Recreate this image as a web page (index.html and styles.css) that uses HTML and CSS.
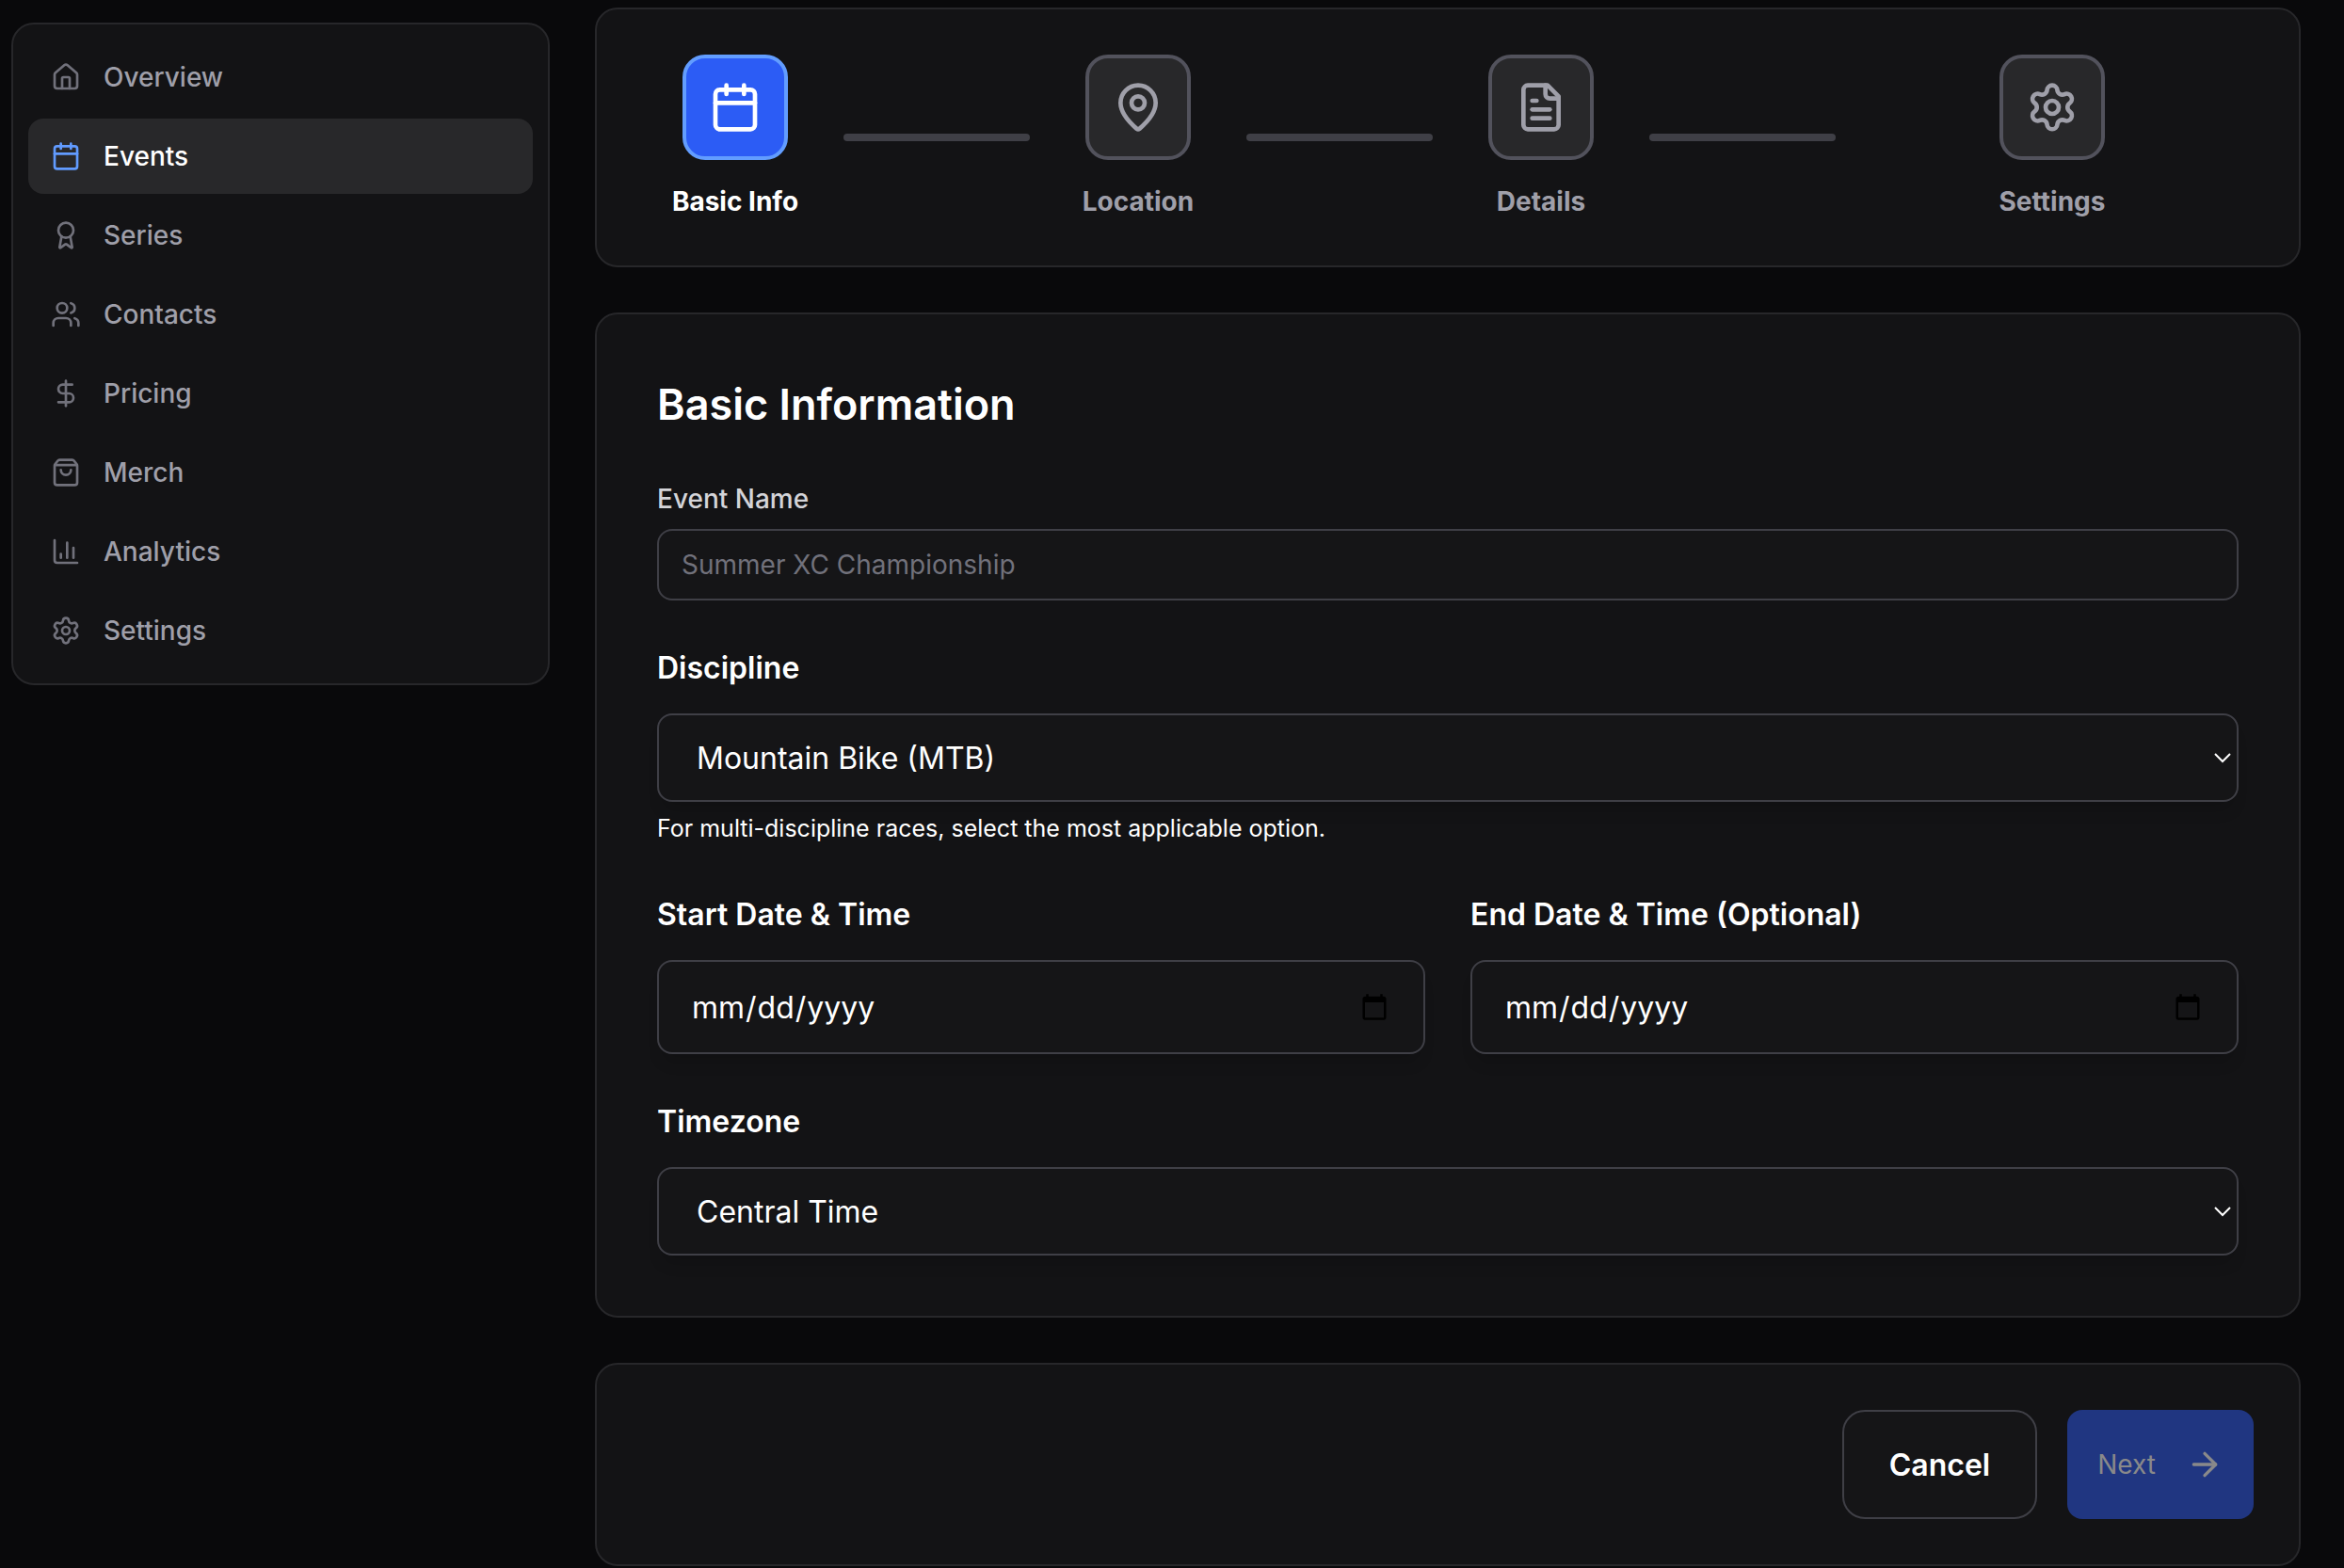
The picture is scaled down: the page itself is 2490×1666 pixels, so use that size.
FILE: index.html
```
<!DOCTYPE html>
<html lang="en">
<head>
    <meta charset="UTF-8">
    <meta name="viewport" content="width=device-width, initial-scale=1.0">
    <title>Create Event</title>
    <link rel="stylesheet" href="styles.css">
</head>
<body>
    <div class="layout">
        <nav class="sidebar">
            <a href="#" class="nav-item">
                <svg class="icon" viewBox="0 0 24 24"><path d="M15 21v-8a1 1 0 0 0-1-1h-4a1 1 0 0 0-1 1v8"/><path d="M3 10a2 2 0 0 1 .709-1.528l7-6a2 2 0 0 1 2.582 0l7 6A2 2 0 0 1 21 10v9a2 2 0 0 1-2 2H5a2 2 0 0 1-2-2z"/></svg>
                Overview
            </a>
            <a href="#" class="nav-item active">
                <svg class="icon" viewBox="0 0 24 24"><path d="M8 2v4"/><path d="M16 2v4"/><rect width="18" height="18" x="3" y="4" rx="2"/><path d="M3 10h18"/></svg>
                Events
            </a>
            <a href="#" class="nav-item">
                <svg class="icon" viewBox="0 0 24 24"><path d="m15.477 12.89 1.515 8.526a.5.5 0 0 1-.81.47l-3.58-2.687a1 1 0 0 0-1.197 0l-3.586 2.686a.5.5 0 0 1-.81-.469l1.514-8.526"/><circle cx="12" cy="8" r="6"/></svg>
                Series
            </a>
            <a href="#" class="nav-item">
                <svg class="icon" viewBox="0 0 24 24"><path d="M16 21v-2a4 4 0 0 0-4-4H6a4 4 0 0 0-4 4v2"/><path d="M16 3.128a4 4 0 0 1 0 7.744"/><path d="M22 21v-2a4 4 0 0 0-3-3.87"/><circle cx="9" cy="7" r="4"/></svg>
                Contacts
            </a>
            <a href="#" class="nav-item">
                <svg class="icon" viewBox="0 0 24 24"><path d="M12 2v20"/><path d="M17 5H9.5a3.5 3.5 0 0 0 0 7h5a3.5 3.5 0 0 1 0 7H6"/></svg>
                Pricing
            </a>
            <a href="#" class="nav-item">
                <svg class="icon" viewBox="0 0 24 24"><path d="M16 10a4 4 0 0 1-8 0"/><path d="M3.103 6.034h17.794"/><path d="M3.4 5.467a2 2 0 0 0-.4 1.2V20a2 2 0 0 0 2 2h14a2 2 0 0 0 2-2V6.667a2 2 0 0 0-.4-1.2l-2-2.667A2 2 0 0 0 17 2H7a2 2 0 0 0-1.6.8z"/></svg>
                Merch
            </a>
            <a href="#" class="nav-item">
                <svg class="icon" viewBox="0 0 24 24"><path d="M3 3v16a2 2 0 0 0 2 2h16"/><path d="M18 17V9"/><path d="M13 17V5"/><path d="M8 17v-3"/></svg>
                Analytics
            </a>
            <a href="#" class="nav-item">
                <svg class="icon" viewBox="0 0 24 24"><path d="M9.671 4.136a2.34 2.34 0 0 1 4.659 0 2.34 2.34 0 0 0 3.319 1.915 2.34 2.34 0 0 1 2.33 4.033 2.34 2.34 0 0 0 0 3.831 2.34 2.34 0 0 1-2.33 4.033 2.34 2.34 0 0 0-3.319 1.915 2.34 2.34 0 0 1-4.659 0 2.34 2.34 0 0 0-3.32-1.915 2.34 2.34 0 0 1-2.33-4.033 2.34 2.34 0 0 0 0-3.831A2.34 2.34 0 0 1 6.35 6.051a2.34 2.34 0 0 0 3.319-1.915"/><circle cx="12" cy="12" r="3"/></svg>
                Settings
            </a>
        </nav>

        <main class="content">
            <!-- Wizard progress -->
            <section class="card steps">
                <div class="step current">
                    <div class="step-body">
                        <div class="step-icon">
                            <svg class="icon" viewBox="0 0 24 24"><path d="M8 2v4"/><path d="M16 2v4"/><rect width="18" height="18" x="3" y="4" rx="2"/><path d="M3 10h18"/></svg>
                        </div>
                        <span class="step-label">Basic Info</span>
                    </div>
                    <div class="step-line"></div>
                </div>
                <div class="step">
                    <div class="step-body">
                        <div class="step-icon">
                            <svg class="icon" viewBox="0 0 24 24"><path d="M20 10c0 4.993-5.539 10.193-7.399 11.799a1 1 0 0 1-1.202 0C9.539 20.193 4 14.993 4 10a8 8 0 0 1 16 0"/><circle cx="12" cy="10" r="3"/></svg>
                        </div>
                        <span class="step-label">Location</span>
                    </div>
                    <div class="step-line"></div>
                </div>
                <div class="step">
                    <div class="step-body">
                        <div class="step-icon">
                            <svg class="icon" viewBox="0 0 24 24"><path d="M15 2H6a2 2 0 0 0-2 2v16a2 2 0 0 0 2 2h12a2 2 0 0 0 2-2V7Z"/><path d="M14 2v4a2 2 0 0 0 2 2h4"/><path d="M10 9H8"/><path d="M16 13H8"/><path d="M16 17H8"/></svg>
                        </div>
                        <span class="step-label">Details</span>
                    </div>
                    <div class="step-line"></div>
                </div>
                <div class="step">
                    <div class="step-body">
                        <div class="step-icon">
                            <svg class="icon" viewBox="0 0 24 24"><path d="M9.671 4.136a2.34 2.34 0 0 1 4.659 0 2.34 2.34 0 0 0 3.319 1.915 2.34 2.34 0 0 1 2.33 4.033 2.34 2.34 0 0 0 0 3.831 2.34 2.34 0 0 1-2.33 4.033 2.34 2.34 0 0 0-3.319 1.915 2.34 2.34 0 0 1-4.659 0 2.34 2.34 0 0 0-3.32-1.915 2.34 2.34 0 0 1-2.33-4.033 2.34 2.34 0 0 0 0-3.831A2.34 2.34 0 0 1 6.35 6.051a2.34 2.34 0 0 0 3.319-1.915"/><circle cx="12" cy="12" r="3"/></svg>
                        </div>
                        <span class="step-label">Settings</span>
                    </div>
                </div>
            </section>

            <form class="card form">
                <h2>Basic Information</h2>

                <div class="field name-field">
                    <label for="event-name">Event Name</label>
                    <input type="text" id="event-name" placeholder="Summer XC Championship">
                </div>

                <div class="field">
                    <label for="discipline">Discipline</label>
                    <div class="select-wrap">
                        <select id="discipline">
                            <option>Mountain Bike (MTB)</option>
                            <option>Road</option>
                            <option>Gravel</option>
                            <option>Cyclocross</option>
                        </select>
                        <svg class="chevron" viewBox="0 0 18 12"><path d="M1 2l8 8 8-8"/></svg>
                    </div>
                    <p class="hint">For multi-discipline races, select the most applicable option.</p>
                </div>

                <div class="date-row">
                    <div class="field">
                        <label for="start-date">Start Date &amp; Time</label>
                        <input type="date" id="start-date">
                    </div>
                    <div class="field">
                        <label for="end-date">End Date &amp; Time (Optional)</label>
                        <input type="date" id="end-date">
                    </div>
                </div>

                <div class="field">
                    <label for="timezone">Timezone</label>
                    <div class="select-wrap">
                        <select id="timezone">
                            <option>Central Time</option>
                            <option>Eastern Time</option>
                            <option>Mountain Time</option>
                            <option>Pacific Time</option>
                        </select>
                        <svg class="chevron" viewBox="0 0 18 12"><path d="M1 2l8 8 8-8"/></svg>
                    </div>
                </div>
            </form>

            <footer class="card actions">
                <button type="button" class="btn-cancel">Cancel</button>
                <button type="button" class="btn-next" disabled>
                    Next
                    <svg class="icon" viewBox="0 0 24 24"><path d="M5 12h14"/><path d="m12 5 7 7-7 7"/></svg>
                </button>
            </footer>
        </main>
    </div>
</body>
</html>
```
FILE: styles.css
```
* {
    margin: 0;
    padding: 0;
    box-sizing: border-box;
    font-family: 'Inter', sans-serif;
}

body {
    background-color: #09090b;
    color: #fff;
    font-size: 28px;
    line-height: 40px;
}

.layout {
    display: flex;
    align-items: flex-start;
    gap: 48px;
    padding: 8px 46px 2px 12px;
}

.icon {
    flex-shrink: 0;
    fill: none;
    stroke: currentColor;
    stroke-width: 2;
    stroke-linecap: round;
    stroke-linejoin: round;
}

/* Sidebar */
.sidebar {
    display: flex;
    flex-direction: column;
    gap: 4px;
    width: 572px;
    flex-shrink: 0;
    margin-top: 16px;
    padding: 16px;
    background-color: #131315;
    border: 2px solid #27272a;
    border-radius: 24px;
}

.nav-item {
    display: flex;
    align-items: center;
    gap: 24px;
    padding: 20px 24px;
    border-radius: 16px;
    color: #9f9fa9;
    font-weight: 500;
    text-decoration: none;
}

.nav-item .icon {
    width: 32px;
    height: 32px;
    color: #71717b;
}

.nav-item.active {
    background-color: #28282a;
    color: #fff;
}

.nav-item.active .icon {
    color: #619bff;
}

/* Main column */
.content {
    display: flex;
    flex-direction: column;
    flex: 1;
    min-width: 0;
    gap: 48px;
}

.card {
    background-color: #131315;
    border: 2px solid #27272a;
    border-radius: 24px;
}

.steps {
    display: flex;
    padding: 48px;
}

.step {
    display: flex;
    flex: 1;
    align-items: center;
}

.step-body {
    display: flex;
    flex: 1;
    flex-direction: column;
    align-items: center;
    gap: 24px;
}

.step-icon {
    display: flex;
    align-items: center;
    justify-content: center;
    width: 112px;
    height: 112px;
    background-color: #28282a;
    border: 4px solid #52525c;
    border-radius: 24px;
    color: #9f9fa9;
}

.step-icon .icon {
    width: 56px;
    height: 56px;
}

.step-label {
    color: #9f9fa9;
    font-weight: 700;
    white-space: nowrap;
}

.step-line {
    flex: 1;
    height: 8px;
    margin: 0 16px;
    background-color: #3f3f46;
    border-radius: 4px;
}

.step.current .step-icon {
    background-color: #2c5cf5;
    border-color: #629dff;
    color: #fff;
}

.step.current .step-label {
    color: #fff;
}

/* Form */
.form {
    display: flex;
    flex-direction: column;
    gap: 48px;
    padding: 64px;
}

.form h2 {
    font-size: 45px;
    font-weight: 600;
    line-height: 64px;
}

.field {
    display: flex;
    flex-direction: column;
}

.field label {
    margin-bottom: 24px;
    font-size: 32px;
    font-weight: 600;
    line-height: 48px;
}

.field input,
.field select {
    width: 100%;
    color: #fff;
    background-color: #151517;
    border: 2px solid #3f3f46;
    border-radius: 16px;
    outline: none;
}

.name-field label {
    margin-bottom: 12px;
    color: #d4d4d8;
    font-size: 28px;
    font-weight: 500;
    line-height: 40px;
}

.name-field input {
    height: 76px;
    padding: 0 24px;
    font-size: 28px;
}

.name-field input::placeholder {
    color: #71717b;
}

.field select,
.field input[type="date"] {
    font-size: 32px;
    box-shadow: 0 14px 16px -6px rgba(0, 0, 0, 0.15);
}

.select-wrap {
    position: relative;
}

.field select {
    display: block;
    height: 94px;
    padding: 0 40px;
    appearance: none;
}

.chevron {
    position: absolute;
    top: 41px;
    right: 8px;
    width: 18px;
    height: 12px;
    fill: none;
    stroke: #fff;
    stroke-width: 2;
    pointer-events: none;
}

.hint {
    margin-top: 8px;
    font-size: 25px;
}

.date-row {
    display: grid;
    grid-template-columns: 1fr 1fr;
    gap: 48px;
}

.field input[type="date"] {
    height: 100px;
    padding: 0 34px;
}

.field input[type="date"]::-webkit-calendar-picker-indicator {
    width: 32px;
    height: 32px;
    padding: 2px;
    background: url("data:image/svg+xml,%3Csvg xmlns='http://www.w3.org/2000/svg' viewBox='0 0 24 24'%3E%3Cpath d='M20 3h-1V1h-2v2H7V1H5v2H4c-1.1 0-2 .9-2 2v16c0 1.1.9 2 2 2h16c1.1 0 2-.9 2-2V5c0-1.1-.9-2-2-2zm0 18H4V8h16v13z'/%3E%3C/svg%3E") center / 30px 30px no-repeat;
}

/* Footer buttons */
.actions {
    display: flex;
    justify-content: flex-end;
    gap: 32px;
    padding: 48px;
}

.actions button {
    height: 116px;
    cursor: pointer;
}

.btn-cancel {
    padding: 0 48px;
    background-color: #151517;
    border: 2px solid #3f3f46;
    border-radius: 24px;
    color: #fff;
    font-size: 32px;
    font-weight: 600;
}

.btn-next {
    display: flex;
    align-items: center;
    gap: 32px;
    padding: 0 32px;
    background-color: #203681;
    border: none;
    border-radius: 16px;
    color: #89898a;
    font-size: 28px;
}

.btn-next .icon {
    width: 40px;
    height: 40px;
}
```
